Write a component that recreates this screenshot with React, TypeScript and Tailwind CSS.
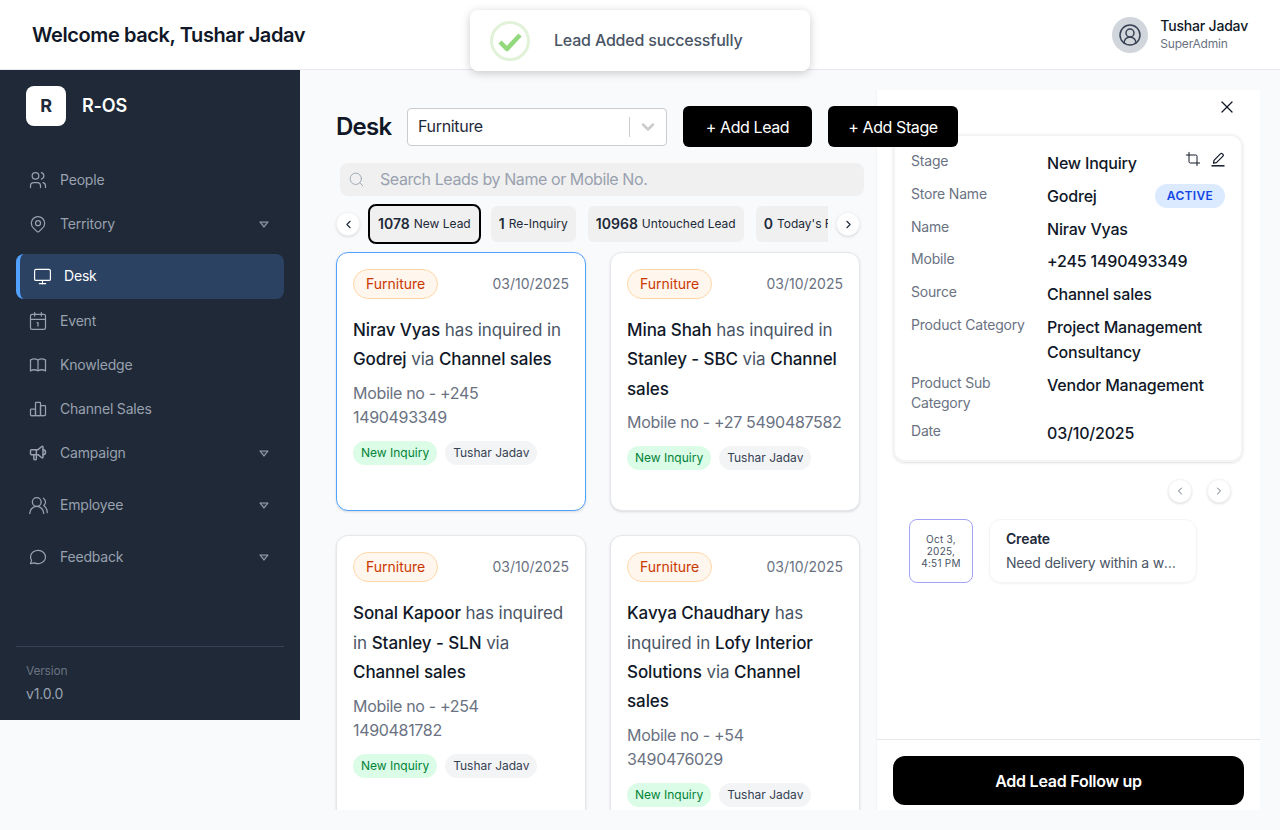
import React from 'react'
import {
  Calendar1,
  ChevronDown,
  ChevronLeft,
  ChevronRight,
  CircleUserRound,
  Crop,
  Monitor,
  Search,
  UsersRound,
  X,
} from 'lucide-react'
import {
  TbBook,
  TbChartBar,
  TbMapPin,
  TbMessageCircle,
  TbSpeakerphone,
  TbUsers,
} from 'react-icons/tb'

const Caret = () => (
  <svg width="10" height="7" viewBox="0 0 10 7" className="text-gray-400">
    <path d="M1 1h8L5 6z" fill="currentColor" fillOpacity="0.2" stroke="currentColor" strokeWidth="1.2" strokeLinejoin="round" />
  </svg>
)

const EditIcon = () => (
  <svg width="16" height="16" viewBox="0 0 16 16" fill="none" stroke="currentColor" strokeWidth="1.2">
    <path d="M1.5 14.8h13" strokeWidth="1.5" />
    <path d="M3.5 12.2l.5-2.9 6.6-6.6a1.1 1.1 0 0 1 1.6 0l.8.8a1.1 1.1 0 0 1 0 1.6L6.4 11.7z" strokeLinejoin="round" />
  </svg>
)

type NavItem = {
  label: string
  icon: React.ReactNode
  caret?: boolean
  height: string
}

const topNav: NavItem[] = [
  { label: 'People', icon: <TbUsers size={20} strokeWidth={1.5} />, height: 'h-[44px]' },
  { label: 'Territory', icon: <TbMapPin size={20} strokeWidth={1.5} />, caret: true, height: 'h-[44px]' },
]

const bottomNav: NavItem[] = [
  { label: 'Event', icon: <Calendar1 size={20} strokeWidth={1.5} />, height: 'h-[44px]' },
  { label: 'Knowledge', icon: <TbBook size={20} strokeWidth={1.5} />, height: 'h-[44px]' },
  { label: 'Channel Sales', icon: <TbChartBar size={20} strokeWidth={1.5} />, height: 'h-[44px]' },
  { label: 'Campaign', icon: <TbSpeakerphone size={20} strokeWidth={1.75} />, caret: true, height: 'h-[44px] mb-1' },
  { label: 'Employee', icon: <UsersRound size={21} strokeWidth={1.5} />, caret: true, height: 'h-[52px]' },
  { label: 'Feedback', icon: <TbMessageCircle size={20} strokeWidth={1.5} />, caret: true, height: 'h-[52px]' },
]

const NavRow = ({ item }: { item: NavItem }) => (
  <div className={`flex items-center pl-[28px] pr-[31px] text-sm text-gray-400 ${item.height}`}>
    <span className="w-[32px] shrink-0">{item.icon}</span>
    <span className="flex-1">{item.label}</span>
    {item.caret ? <Caret /> : null}
  </div>
)

const Sidebar = () => (
  <aside className="flex h-[650px] w-[300px] shrink-0 flex-col bg-[#1f2937]">
    <div className="flex items-center gap-4 pl-[26px] pt-4">
      <div className="flex h-10 w-10 items-center justify-center rounded-lg bg-white text-lg font-bold text-gray-800">
        R
      </div>
      <span className="text-lg font-semibold text-white">R-OS</span>
    </div>

    <nav className="mt-8">
      {topNav.map((item) => (
        <NavRow key={item.label} item={item} />
      ))}
      <div className="mx-4 mt-2 flex h-[45px] items-center rounded-lg border-l-4 border-blue-400 bg-[#2b4263] pb-px pl-[13px] text-sm text-white">
        <Monitor size={19} strokeWidth={1.5} className="mr-[12px]" />
        Desk
      </div>
      {bottomNav.map((item) => (
        <NavRow key={item.label} item={item} />
      ))}
    </nav>

    <div className="mx-4 mt-auto border-t border-gray-700 pb-4 pl-2.5 pt-4">
      <div className="text-xs leading-4 text-gray-500">Version</div>
      <div className="mt-[5px] text-sm text-gray-400">v1.0.0</div>
    </div>
  </aside>
)

type Lead = {
  name: string
  store: string
  channel: string
  mobile: string
}

const leads: Lead[] = [
  { name: 'Nirav Vyas', store: 'Godrej', channel: 'Channel sales', mobile: '+245 1490493349' },
  { name: 'Mina Shah', store: 'Stanley - SBC', channel: 'Channel sales', mobile: '+27 5490487582' },
  { name: 'Sonal Kapoor', store: 'Stanley - SLN', channel: 'Channel sales', mobile: '+254 1490481782' },
  { name: 'Kavya Chaudhary', store: 'Lofy Interior Solutions', channel: 'Channel sales', mobile: '+54 3490476029' },
]

const LeadCard = ({ lead, active }: { lead: Lead; active?: boolean }) => (
  <div
    className={`rounded-xl border bg-white p-4 pb-10 shadow-sm ${
      active ? 'border-blue-400 shadow-md' : 'border-gray-200'
    }`}
  >
    <div className="flex items-center justify-between tracking-normal">
      <span className="flex h-[30px] items-center rounded-full border border-orange-200 bg-orange-50 px-3 text-sm text-orange-700">
        Furniture
      </span>
      <span className="text-sm text-gray-500">03/10/2025</span>
    </div>
    <p className="mt-[17px] text-[17px] leading-[29.25px] tracking-[-0.005em] text-gray-600">
      <span className="font-medium text-gray-900">{lead.name}</span> has inquired in{' '}
      <span className="font-medium text-gray-900">{lead.store}</span> via{' '}
      <span className="font-medium text-gray-900">{lead.channel}</span>
    </p>
    <p className="mt-[6.5px] text-base leading-6 tracking-[-0.02em] text-gray-500">Mobile no - {lead.mobile}</p>
    <div className="mt-3 flex gap-2 tracking-normal">
      <span className="flex h-6 items-center rounded-full bg-green-100 px-2 text-xs text-green-700">New Inquiry</span>
      <span className="flex h-6 items-center rounded-full bg-gray-100 px-2 text-xs text-gray-700">Tushar Jadav</span>
    </div>
  </div>
)

const ArrowButton = ({ children }: { children: React.ReactNode }) => (
  <button className="flex h-6 w-6 shrink-0 items-center justify-center rounded-full border border-gray-100 bg-white shadow-sm">
    {children}
  </button>
)

const chips = [
  { count: '1078', label: 'New Lead', active: true },
  { count: '1', label: 'Re-Inquiry' },
  { count: '10968', label: 'Untouched Lead' },
  { count: '0', label: "Today's Followup" },
]

const DeskColumn = () => (
  <div className="relative z-10 w-[576px] shrink-0 pl-9 pt-9">
    <div className="flex items-center">
      <h1 className="w-[71px] shrink-0 text-2xl font-semibold tracking-[-0.03em] text-gray-900">Desk</h1>
      <div className="flex h-[38px] w-[260px] shrink-0 items-center rounded border border-[#ccc] bg-white pl-2.5 text-base tracking-[-0.02em] text-gray-800">
        <span className="flex-1 pb-0.5">Furniture</span>
        <span className="h-5 w-px bg-[#ccc]" />
        <ChevronDown size={20} strokeWidth={3} className="mx-2 text-[#ccc]" />
      </div>
      <button className="ml-4 h-[41px] w-[129px] shrink-0 rounded-md bg-black text-base tracking-[-0.025em] text-white">
        + Add Lead
      </button>
      <button className="ml-4 h-[41px] w-[130px] shrink-0 rounded-md bg-black text-base tracking-[-0.025em] text-white">
        + Add Stage
      </button>
    </div>

    <div className="ml-1 mt-4 flex h-[33px] w-[524px] items-center rounded-lg bg-[#f0f0f0] pl-2">
      <Search size={17} strokeWidth={1.25} className="text-gray-400" />
      <span className="ml-[15px] pb-px text-base tracking-[-0.026em] text-gray-400">
        Search Leads by Name or Mobile No.
      </span>
    </div>

    <div className="mt-2 flex w-[524px] items-center gap-2">
      <ArrowButton>
        <ChevronLeft size={13} className="text-gray-800" />
      </ArrowButton>
      <div className="flex w-[460px] gap-3 overflow-hidden p-0.5">
        {chips.map((chip) => (
          <div
            key={chip.label}
            className={`flex h-9 shrink-0 items-center gap-1 rounded-md bg-[#f0f0f0] px-2 text-xs tracking-normal text-gray-800 ${
              chip.active ? 'outline-2 outline-black' : ''
            }`}
          >
            <span className="text-sm font-semibold">{chip.count}</span>
            {chip.label}
          </div>
        ))}
      </div>
      <ArrowButton>
        <ChevronRight size={13} className="text-gray-800" />
      </ArrowButton>
    </div>

    <div className="mt-2 grid w-[524px] grid-cols-[250px_250px] gap-6">
      {leads.map((lead, i) => (
        <LeadCard key={lead.name} lead={lead} active={i === 0} />
      ))}
    </div>
  </div>
)

const details: { label: string; value: string; badge?: boolean }[] = [
  { label: 'Stage', value: 'New Inquiry' },
  { label: 'Store Name', value: 'Godrej', badge: true },
  { label: 'Name', value: 'Nirav Vyas' },
  { label: 'Mobile', value: '+245 1490493349' },
  { label: 'Source', value: 'Channel sales' },
  { label: 'Product Category', value: 'Project Management Consultancy' },
  { label: 'Product Sub Category', value: 'Vendor Management' },
  { label: 'Date', value: '03/10/2025' },
]

const LeadPanel = () => (
  <div className="mt-5 flex h-[720px] w-[384px] shrink-0 flex-col border-l border-gray-100 bg-white">
    <div className="flex h-[44px] items-center justify-end pb-[10px] pr-[23px]">
      <X size={20} strokeWidth={1.5} className="text-gray-900" />
    </div>

    <div className="relative ml-4 w-[350px] rounded-xl border-2 border-gray-100 pb-[14px] pl-4 pr-4 pt-[15px] shadow-sm">
      <div className="absolute right-[15px] top-[15px] flex gap-[9px] text-gray-900">
        <Crop size={16} strokeWidth={1.5} />
        <EditIcon />
      </div>
      <div className="flex flex-col gap-[7.75px]">
        {details.map((row) => (
          <div key={row.label} className="flex last:mt-px">
            <div className="w-[136px] shrink-0 pr-4 text-sm leading-5 text-gray-500">{row.label}</div>
            <div className="flex flex-1 items-start justify-between text-base font-medium leading-[25px] text-gray-900">
              {row.value}
              {row.badge ? (
                <span className="flex h-6 items-center rounded-full bg-blue-100 px-3 text-xs font-semibold tracking-wide text-blue-700">
                  ACTIVE
                </span>
              ) : null}
            </div>
          </div>
        ))}
      </div>
    </div>

    <div className="mt-[17px] flex justify-end gap-[15px] pr-[29px]">
      <ArrowButton>
        <ChevronLeft size={12} className="text-gray-500" />
      </ArrowButton>
      <ArrowButton>
        <ChevronRight size={12} className="text-gray-500" />
      </ArrowButton>
    </div>

    <div className="ml-8 mt-4 flex gap-4">
      <div className="flex h-16 w-16 items-center justify-center rounded-lg border border-[#a3a3f5] px-2 text-center text-[10px] leading-3 tracking-wide text-gray-600">
        Oct 3, 2025, 4:51 PM
      </div>
      <div className="h-16 w-[208px] rounded-xl border border-gray-100 px-4 py-[9px] shadow-xs">
        <div className="text-sm font-semibold leading-5 text-gray-800">Create</div>
        <div className="mt-1 truncate text-sm leading-5 text-gray-600">Need delivery within a week</div>
      </div>
    </div>

    <div className="mt-auto border-t border-gray-200 px-4 pb-[5px] pt-4">
      <button className="h-[49px] w-[351px] rounded-xl bg-black text-base font-semibold tracking-[-0.015em] text-white">
        Add Lead Follow up
      </button>
    </div>
  </div>
)

const Toast = () => (
  <div className="absolute left-[470px] top-[10px] z-20 flex h-[61px] w-[340px] items-center rounded-lg bg-white pl-5 shadow-[0_2px_10px_rgba(0,0,0,0.2)]">
    <svg width="40" height="40" viewBox="0 0 40 40">
      <circle cx="20" cy="20" r="18.5" fill="none" stroke="#e2f2d9" strokeWidth="3" />
      <path d="M10 21l7 7 13-14" fill="none" stroke="#92d97d" strokeWidth="4.5" strokeLinejoin="round" />
    </svg>
    <span className="ml-6 pb-0.5 text-base font-medium text-gray-600">Lead Added successfully</span>
  </div>
)

const App = () => {
  return (
    <div className="relative h-[830px] overflow-hidden bg-gray-50 font-['Inter',sans-serif] tracking-[-0.012em]">
      <header className="flex h-[70px] items-center justify-between border-b border-gray-200 bg-white pl-8 pr-8">
        <h2 className="text-xl font-semibold tracking-[-0.02em] text-gray-900">Welcome back, Tushar Jadav</h2>
        <div className="flex items-center gap-[12px]">
          <div className="flex h-9 w-9 items-center justify-center rounded-full bg-gray-300">
            <CircleUserRound size={24} strokeWidth={1.5} className="text-gray-700" />
          </div>
          <div className="pb-0.5">
            <div className="text-sm font-medium leading-5 text-gray-900">Tushar Jadav</div>
            <div className="text-xs leading-4 text-gray-500">SuperAdmin</div>
          </div>
        </div>
      </header>

      <Toast />

      <div className="flex">
        <Sidebar />
        <main className="flex h-[740px] flex-1 overflow-hidden">
          <DeskColumn />
          <LeadPanel />
        </main>
      </div>
    </div>
  )
}

export default App
